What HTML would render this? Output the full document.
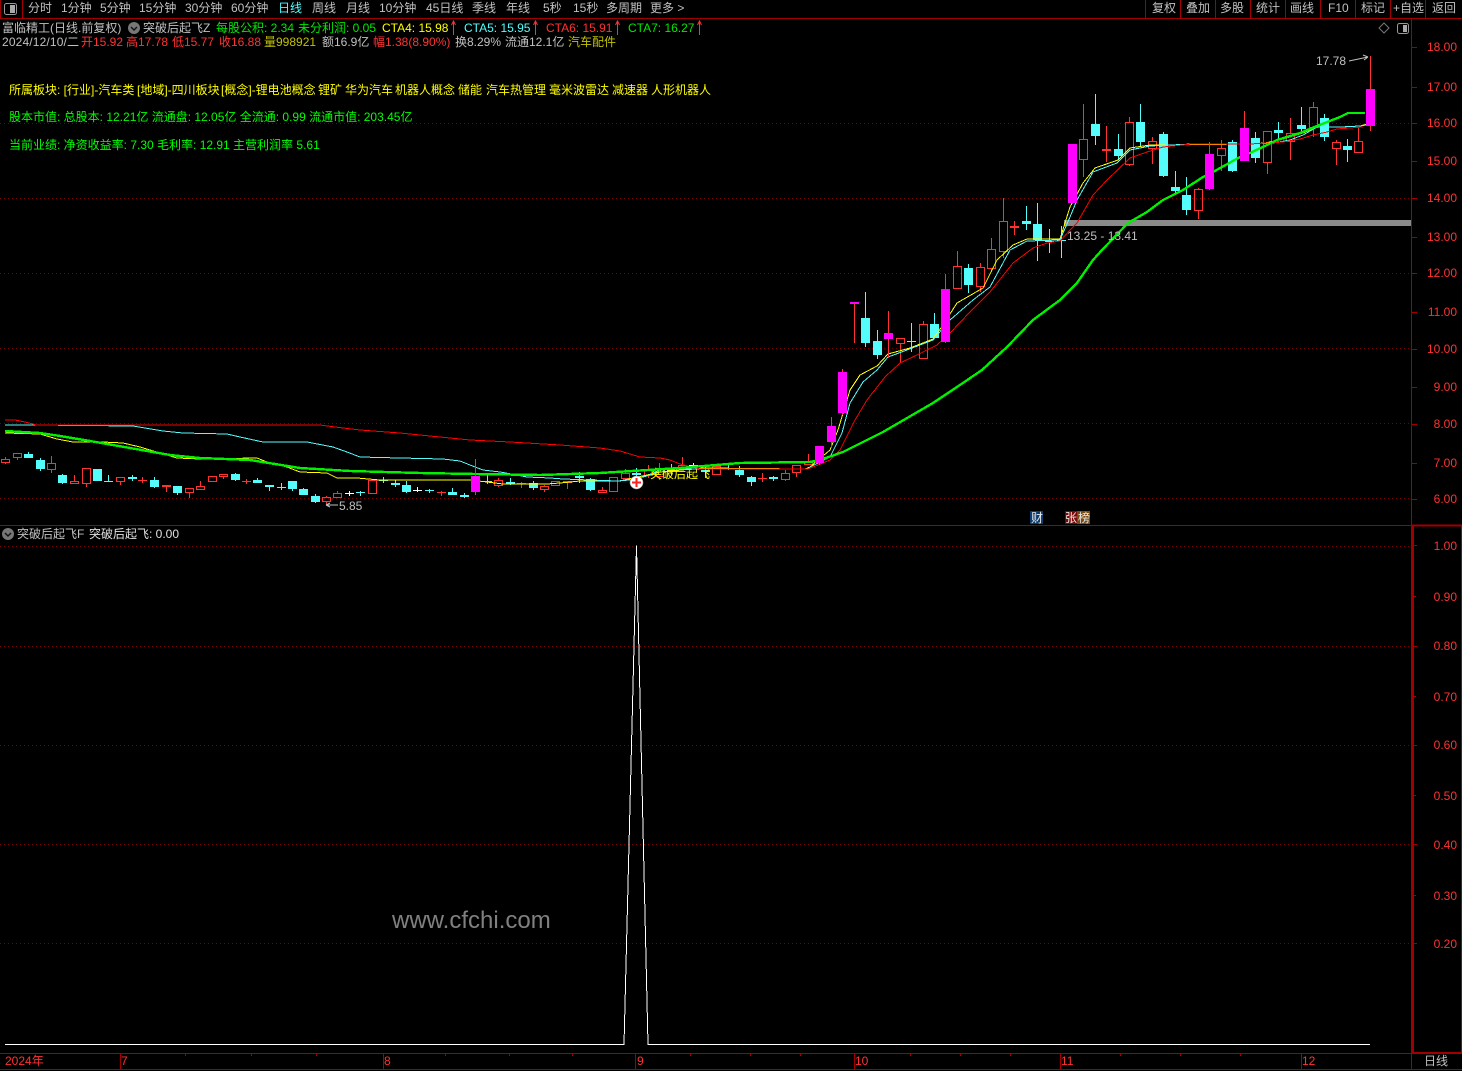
<!DOCTYPE html>
<html lang="zh">
<head>
<meta charset="utf-8">
<title>富临精工</title>
<style>
html,body{margin:0;padding:0;background:#000;}
#w{position:relative;width:1462px;height:1071px;overflow:hidden;background:#000;font:12px "Liberation Sans","WenQuanYi Zen Hei","Noto Sans CJK SC",sans-serif;color:#c0c0c0;}
#w span{position:absolute;white-space:pre;line-height:14px;}
svg{position:absolute;left:0;top:0;}
.g{color:#c0c0c0}.r{color:#ff3232}.y{color:#ffff00}.n{color:#00e800}.c{color:#54fcfc}.o{color:#c0c000}
.t{top:1px;font-size:12px}
.a{left:1417px;width:40px;text-align:right;color:#ff3232}
.l1{top:21px}.l2{top:35px}
.b{top:1054px;color:#ff3232}
.p{top:83px}
</style>
</head>
<body>
<div id="w">
<svg width="1462" height="1071" viewBox="0 0 1462 1071">
<g shape-rendering="crispEdges" fill="none">
<path stroke="#a00000" d="M0 18.5H1462M0 525.5H1411M1411.5 18V1070M22.5 0V18M0.5 0V18M1145.5 0V18M1180.5 0V18M1215.5 0V18M1250.5 0V18M1285.5 0V18M1320.5 0V18M1355.5 0V18M1390.5 0V18M1425.5 0V18M0 1053.5H1412M0 1069.5H1462M1461.5 526V1053M120.5 1053V1069M383.5 1053V1069M635.5 1053V1069M854.5 1053V1069M1060.5 1053V1069M1301.5 1053V1069M185.5 1053V1056M251.5 1053V1056M316.5 1053V1056M445.5 1053V1056M509.5 1053V1056M572.5 1053V1056M690.5 1053V1056M750.5 1053V1056M800.5 1053V1056M910.5 1053V1056M960.5 1053V1056M1010.5 1053V1056M1120.5 1053V1056M1180.5 1053V1056M1240.5 1053V1056M1411 47.5H1417M1411 87.5H1417M1411 123.5H1417M1411 161.5H1417M1411 198.5H1417M1411 237.5H1417M1411 273.5H1417M1411 312.5H1417M1411 349.5H1417M1411 387.5H1417M1411 424.5H1417M1411 463.5H1417M1411 499.5H1417M1413 545.5H1417M1413 596.5H1416M1413 646.5H1417M1413 696.5H1416M1413 745.5H1417M1413 795.5H1416M1413 844.5H1417M1413 895.5H1416M1413 943.5H1417"/>
<path stroke="#a00000" stroke-width="2" d="M1412 525.5H1462M1413 526V1053M1412 1053H1462"/>
<path stroke="#7a0000" stroke-dasharray="1 3" d="M0 123.5H1411M0 198.5H1411M0 273.5H1411M0 348.5H1411M0 423.5H1411M0 498.5H1411M0 546.5H1411M0 646.5H1411M0 745.5H1411M0 844.5H1411M0 943.5H1411"/>
<rect x="1064" y="220" width="347" height="6" fill="#8a8a8a"/>
<path stroke="#ff3232" d="M5.5 457V459M5.5 463V464M1.5 459.5h8v3h-8zM17.5 458V460M13.5 453.5h8v4h-8zM51.5 456V463M51.5 470V473M47.5 463.5h8v6h-8zM74.5 475V481M70.5 481.5h8v2h-8zM86.5 484V487M82.5 468.5h8v15h-8zM120.5 482V485M116.5 477.5h8v4h-8zM142.5 477V483M138 480.5H147M166.5 487V492M162.5 485.5h8v1h-8zM189.5 493V498M185.5 488.5h8v4h-8zM200.5 481V486M196.5 486.5h8v3h-8zM208.5 476.5h8v5h-8zM223.5 477V479M219.5 474.5h8v2h-8zM246.5 479V484M242 481.5H251M326.5 496V497M326.5 502V505M322.5 497.5h8v4h-8zM337.5 491V493M333.5 493.5h8v4h-8zM368.5 480.5h8v13h-8zM441.5 491V496M437 492.5H446M498.5 478V480M498.5 486V487M494.5 480.5h8v5h-8zM521.5 482V488M517 483.5H526M544.5 485V486M544.5 490V492M540.5 486.5h8v3h-8zM551.5 481.5h8v4h-8zM567.5 483V489M563.5 481.5h8v1h-8zM602.5 487V490M598.5 490.5h8v2h-8zM609.5 477.5h8v14h-8zM625.5 469V473M625.5 479V480M621.5 473.5h8v5h-8zM648.5 465V470M648.5 476V478M644.5 470.5h8v5h-8zM659.5 463V468M659.5 477V480M655.5 468.5h8v8h-8zM682.5 457V465M678.5 465.5h8v4h-8zM712.5 466.5h8v8h-8zM762.5 473V482M758 478.5H767M785.5 470V473M785.5 480V481M781.5 473.5h8v6h-8zM796.5 473V477M792.5 465.5h8v7h-8zM808.5 454V462M804.5 462.5h8v2h-8zM900.5 344V363M896.5 338.5h8v5h-8zM923.5 321V324M919.5 324.5h8v34h-8zM957.5 251V266M953.5 266.5h8v22h-8zM980.5 263V267M980.5 287V292M976.5 267.5h8v19h-8zM991.5 238V249M991.5 269V272M987.5 249.5h8v19h-8zM1003.5 198V221M1003.5 252V258M999.5 221.5h8v30h-8zM1014.5 221V235M1010 226.5H1019M1010 227.5H1019M1083.5 104V139M1083.5 160V177M1079.5 139.5h8v20h-8zM1106.5 126V162M1102 149.5H1111M1102 150.5H1111M1129.5 117V122M1129.5 165V166M1125.5 122.5h8v42h-8zM1152.5 137V141M1152.5 149V164M1148.5 141.5h8v7h-8zM1198.5 188V189M1198.5 211V219M1194.5 189.5h8v21h-8zM1221.5 140V148M1221.5 156V171M1217.5 148.5h8v7h-8zM1267.5 163V174M1263.5 131.5h8v31h-8zM1290.5 118V133M1290.5 142V160M1286.5 133.5h8v8h-8zM1313.5 102V107M1313.5 128V137M1309.5 107.5h8v20h-8zM1336.5 140V142M1336.5 149V165M1332.5 142.5h8v6h-8zM1358.5 127V141M1354.5 141.5h8v11h-8z"/>
<path stroke="#54fcfc" fill="#54fcfc" d="M28.5 452V458M24.5 454.5h8v3h-8zM40.5 458V471M36.5 460.5h8v8h-8zM62.5 474V484M58.5 475.5h8v7h-8zM93.5 469V481M93.5 469.5h8v11h-8zM108.5 475V482M104 481.5H113M132.5 475V481M128.5 477.5h8v1h-8zM154.5 477V488M150.5 480.5h8v6h-8zM177.5 486V495M173.5 486.5h8v6h-8zM235.5 473V481M231.5 474.5h8v5h-8zM257.5 478V483M253.5 480.5h8v2h-8zM269.5 485V491M265.5 485.5h8v1h-8zM281.5 483V490M277 487.5H286M292.5 481V491M288.5 481.5h8v7h-8zM303.5 488V495M299.5 489.5h8v5h-8zM315.5 494V503M311.5 496.5h8v5h-8zM360.5 491V496M356 492.5H365M383.5 477V483M379 480.5H388M395.5 480V487M391.5 483.5h8v1h-8zM406.5 481V493M402.5 485.5h8v6h-8zM429.5 489V493M425 490.5H434M452.5 488V495M448.5 492.5h8v2h-8zM464.5 493V498M460.5 495.5h8v1h-8zM487.5 474V484M483 481.5H492M510.5 478V485M506.5 482.5h8v1h-8zM533.5 481V490M529.5 483.5h8v4h-8zM579.5 472V483M575.5 476.5h8v1h-8zM590.5 478V491M586.5 479.5h8v10h-8zM636.5 468V477M632.5 473.5h8v1h-8zM671.5 464V475M667.5 470.5h8v1h-8zM705.5 467V478M701.5 470.5h8v1h-8zM728.5 465V470M724 468.5H733M739.5 466V477M735.5 470.5h8v4h-8zM751.5 476V486M747.5 477.5h8v4h-8zM773.5 476V481M769.5 477.5h8v1h-8zM865.5 292V347M861.5 318.5h8v24h-8zM877.5 330V359M873.5 341.5h8v13h-8zM911.5 323V352M907 341.5H916M934.5 313V338M930.5 324.5h8v13h-8zM968.5 264V293M964.5 268.5h8v16h-8zM1026.5 206V230M1022.5 221.5h8v2h-8zM1037.5 203V261M1033.5 224.5h8v15h-8zM1049.5 229V253M1045 241.5H1054M1061.5 226V258M1057 240.5H1066M1095.5 94V145M1091.5 124.5h8v11h-8zM1118.5 134V159M1114.5 149.5h8v6h-8zM1140.5 104V147M1136.5 122.5h8v19h-8zM1163.5 132V177M1159.5 134.5h8v41h-8zM1175.5 171V193M1171.5 187.5h8v3h-8zM1186.5 177V215M1182.5 195.5h8v14h-8zM1232.5 140V172M1228.5 142.5h8v28h-8zM1255.5 132V163M1251.5 138.5h8v19h-8zM1278.5 122V139M1274.5 130.5h8v2h-8zM1301.5 107V131M1297.5 125.5h8v3h-8zM1324.5 114V141M1320.5 118.5h8v18h-8zM1347.5 139V162M1343.5 146.5h8v3h-8z"/>
<path stroke="#ffffff" d="M349.5 491V496M345 493.5H354M417.5 487V492M413 490.5H422M693.5 463V467M689 465.5H698"/>
</g>
<text x="650" y="478" fill="#ffff00" font-size="12" font-family="'Liberation Sans','WenQuanYi Zen Hei',sans-serif">突破后起飞</text>
<g fill="none" stroke-linejoin="round" shape-rendering="crispEdges">
<polyline stroke="#ffff00" points="5,433 40,434 57,439 73,442 103,442 123,443 140,447 160,453 177,458 200,459 257,458 267,462 287,467 300,472 327,473 337,478 357,478 380,480 470,480 487,482 503,484 547,484 560,483 580,481 620,481 633,478 647,475 660,472 703,468 805,469 810,467 830,450 838,430 850,390 860,375 877,366 888,354 910,348 933,339 943,325 957,303 983,288 997,260 1013,245 1027,239 1060,239 1070,207 1083,183 1095,168 1118,160 1130,148 1150,145 1158,145 1250,144 1265,143 1283,139 1303,133 1317,127 1342,127 1360,126 1367,124"/>
<polyline stroke="#54fcfc" points="5,425 33,425 133,426 163,431 183,433 227,434 240,437 263,442 307,442 333,447 347,452 360,457 400,458 443,459 460,461 470,465 483,470 500,472 517,475 527,477 550,478 563,479 617,481 630,480 647,476 660,470 680,469 808,469 810,467 830,457 842,433 850,403 863,382 877,370 888,357 907,350 933,340 950,320 973,300 990,287 1010,250 1027,241 1060,240 1070,217 1077,200 1093,172 1117,163 1130,150 1150,146 1192,144 1250,144 1273,143 1290,140 1303,135 1317,127 1340,127 1360,126 1366,125"/>
<polyline stroke="#ff0000" points="5,420 15,420 25,422 33,424 36,425 320,425 335,427 360,430 400,433 420,435 440,437 470,440 510,442 560,445 600,448 620,451 640,457 660,458 670,460 680,464 700,469 808,469 830,460 840,450 855,420 867,400 885,377 900,363 917,355 937,345 950,333 970,312 990,292 1013,263 1033,248 1047,243 1060,241 1070,230 1077,223 1093,195 1107,180 1130,158 1147,152 1163,147 1192,144 1250,144 1283,142 1300,139 1313,135 1327,132 1337,129 1363,127"/>
<polyline stroke="#00f000" stroke-width="2.4" points="5,431 40,433 60,436 90,441 130,448 170,455 200,458 250,460 300,468 350,471 420,473 475,474 540,475 600,473 680,468 740,463 810,462 820,460 843,452 883,432 933,403 957,387 982,370 1007,347 1033,320 1060,300 1077,283 1093,260 1102,250 1128,223 1147,212 1163,200 1183,190 1203,177 1213,172 1240,157 1250,153 1267,145 1277,140 1300,133 1317,126 1340,117 1348,113 1365,113"/>
<polyline stroke="#ffffff" points="5,1044.5 624,1044.5 636.5,546 648,1044.5 1370,1044.5"/>
</g>
<g shape-rendering="crispEdges">
<path stroke="#ff3232" fill="none" d="M475.5 459V495M819.5 446V465M831.5 417V448M842.5 369V415M854.5 304V343M888.5 311V357M945.5 274V343M1072.5 144V203M1209.5 142V190M1244.5 111V161M1370.5 56V131"/>
<path fill="#ff00ff" d="M471 476h9v16h-9zM815 446h9v17h-9zM827 426h9v16h-9zM838 372h9v41h-9zM850 302h9v2h-9zM884 333h9v6h-9zM941 289h9v53h-9zM1068 144h9v59h-9zM1205 154h9v35h-9zM1240 128h9v33h-9zM1366 89h9v37h-9z"/>
</g>
<circle cx="636.5" cy="482.5" r="6.5" fill="#fff" stroke="#999" stroke-width="0.6"/>
<path d="M636.5 478V487M632 482.5H641" stroke="#ff2020" stroke-width="2"/>
<path d="M326 505H338M326 505l4-2M326 505l4 2" stroke="#c0c0c0" fill="none"/>
<path d="M1349 61L1368 57M1368 57l-5-2M1368 57l-4 3" stroke="#c0c0c0" fill="none"/>
<g stroke="#ff3232" fill="none">
<path d="M453.5 35V22M451.5 25L453.5 21L455.5 25M535.5 35V22M533.5 25L535.5 21L537.5 25M617.5 35V22M615.5 25L617.5 21L619.5 25M699.5 35V22M697.5 25L699.5 21L701.5 25"/>
</g>
<circle cx="134" cy="28" r="6" fill="#777"/><path d="M131 27l3 3 3-3" stroke="#111" stroke-width="1.4" fill="none"/>
<circle cx="8" cy="534" r="6" fill="#777"/><path d="M5 533l3 3 3-3" stroke="#111" stroke-width="1.4" fill="none"/>
<path d="M1384 23l5 5-5 5-5-5z" fill="none" stroke="#777"/>
<rect x="1397.5" y="23.5" width="11" height="10" rx="2" fill="none" stroke="#999"/><rect x="1403" y="25" width="4" height="7" fill="#aaa"/>
<rect x="4.5" y="3.5" width="12" height="11" rx="2" fill="none" stroke="#999"/><rect x="10" y="5" width="5" height="8" fill="#aaa"/>
<rect x="1030" y="511" width="13" height="13" fill="#0b3c70"/>
<rect x="1065" y="511" width="12" height="13" fill="#7a0808"/>
<rect x="1077" y="511" width="13" height="13" fill="#7a4a10"/>
</svg>

<span class="t" style="left:28px">分时</span>
<span class="t" style="left:61px">1分钟</span>
<span class="t" style="left:100px">5分钟</span>
<span class="t" style="left:139px">15分钟</span>
<span class="t" style="left:185px">30分钟</span>
<span class="t" style="left:231px">60分钟</span>
<span class="t c" style="left:278px">日线</span>
<span class="t" style="left:312px">周线</span>
<span class="t" style="left:346px">月线</span>
<span class="t" style="left:379px">10分钟</span>
<span class="t" style="left:426px">45日线</span>
<span class="t" style="left:472px">季线</span>
<span class="t" style="left:506px">年线</span>
<span class="t" style="left:543px">5秒</span>
<span class="t" style="left:573px">15秒</span>
<span class="t" style="left:606px">多周期</span>
<span class="t" style="left:650px">更多 &gt;</span>
<span class="t" style="left:1152px">复权</span>
<span class="t" style="left:1186px">叠加</span>
<span class="t" style="left:1220px">多股</span>
<span class="t" style="left:1256px">统计</span>
<span class="t" style="left:1290px">画线</span>
<span class="t" style="left:1328px">F10</span>
<span class="t" style="left:1361px">标记</span>
<span class="t" style="left:1393px">+自选</span>
<span class="t" style="left:1432px">返回</span>

<span class="l1" style="left:2px">富临精工(日线.前复权)</span>
<span class="l1" style="left:143px">突破后起飞Z</span>
<span class="l1 n" style="left:216px">每股公积: 2.34</span>
<span class="l1 n" style="left:298px">未分利润: 0.05</span>
<span class="l1 y" style="left:382px">CTA4: 15.98</span>
<span class="l1 c" style="left:464px">CTA5: 15.95</span>
<span class="l1 r" style="left:546px">CTA6: 15.91</span>
<span class="l1 n" style="left:628px">CTA7: 16.27</span>

<span class="l2" style="left:2px;letter-spacing:.15px">2024/12/10/二</span>
<span class="l2 r" style="left:81px">开15.92</span>
<span class="l2 r" style="left:126px">高17.78</span>
<span class="l2 r" style="left:172px">低15.77</span>
<span class="l2 r" style="left:219px">收16.88</span>
<span class="l2 o" style="left:264px">量998921</span>
<span class="l2" style="left:322px">额16.9亿</span>
<span class="l2 r" style="left:373px">幅1.38(8.90%)</span>
<span class="l2" style="left:455px">换8.29%</span>
<span class="l2" style="left:505px">流通12.1亿</span>
<span class="l2 o" style="left:568px">汽车配件</span>

<span class="y p" style="left:9px">所属板块: [行业]-汽车类</span>
<span class="y p" style="left:137px">[地域]-四川板块</span>
<span class="y p" style="left:221px">[概念]-锂电池概念</span>
<span class="y p" style="left:318px">锂矿</span>
<span class="y p" style="left:345px">华为汽车</span>
<span class="y p" style="left:395px">机器人概念</span>
<span class="y p" style="left:458px">储能</span>
<span class="y p" style="left:486px">汽车热管理</span>
<span class="y p" style="left:549px">毫米波雷达</span>
<span class="y p" style="left:612px">减速器</span>
<span class="y p" style="left:651px">人形机器人</span>
<span style="left:9px;top:110px;color:#00ff00">股本市值: 总股本: 12.21亿 流通盘: 12.05亿 全流通: 0.99 流通市值: 203.45亿</span>
<span style="left:9px;top:138px;color:#00ff00">当前业绩: 净资收益率: 7.30 毛利率: 12.91 主营利润率 5.61</span>

<span style="left:1316px;top:54px">17.78</span>
<span style="left:339px;top:499px">5.85</span>
<span style="left:1067px;top:229px">13.25 - 13.41</span>
<span style="left:1031px;top:511px;color:#e8e8e8">财</span>
<span style="left:1065px;top:511px;color:#e8e8e8">张</span>
<span style="left:1078px;top:511px;color:#e8e8e8">榜</span>

<span class="a" style="top:40px">18.00</span>
<span class="a" style="top:80px">17.00</span>
<span class="a" style="top:116px">16.00</span>
<span class="a" style="top:154px">15.00</span>
<span class="a" style="top:191px">14.00</span>
<span class="a" style="top:230px">13.00</span>
<span class="a" style="top:266px">12.00</span>
<span class="a" style="top:305px">11.00</span>
<span class="a" style="top:342px">10.00</span>
<span class="a" style="top:380px">9.00</span>
<span class="a" style="top:417px">8.00</span>
<span class="a" style="top:456px">7.00</span>
<span class="a" style="top:492px">6.00</span>

<span class="a" style="top:539px">1.00</span>
<span class="a" style="top:590px">0.90</span>
<span class="a" style="top:639px">0.80</span>
<span class="a" style="top:690px">0.70</span>
<span class="a" style="top:738px">0.60</span>
<span class="a" style="top:789px">0.50</span>
<span class="a" style="top:838px">0.40</span>
<span class="a" style="top:889px">0.30</span>
<span class="a" style="top:937px">0.20</span>

<span style="left:17px;top:527px">突破后起飞F</span>
<span style="left:89px;top:527px;color:#e0e0e0">突破后起飞: 0.00</span>

<span style="left:392px;top:907px;font-size:24px;line-height:27px;color:#808080">www.cfchi.com</span>

<span class="b" style="left:5px">2024年</span>
<span class="b" style="left:121px">7</span>
<span class="b" style="left:384px">8</span>
<span class="b" style="left:637px">9</span>
<span class="b" style="left:855px">10</span>
<span class="b" style="left:1061px">11</span>
<span class="b" style="left:1302px">12</span>
<span style="left:1424px;top:1054px">日线</span>
</div>
</body>
</html>
